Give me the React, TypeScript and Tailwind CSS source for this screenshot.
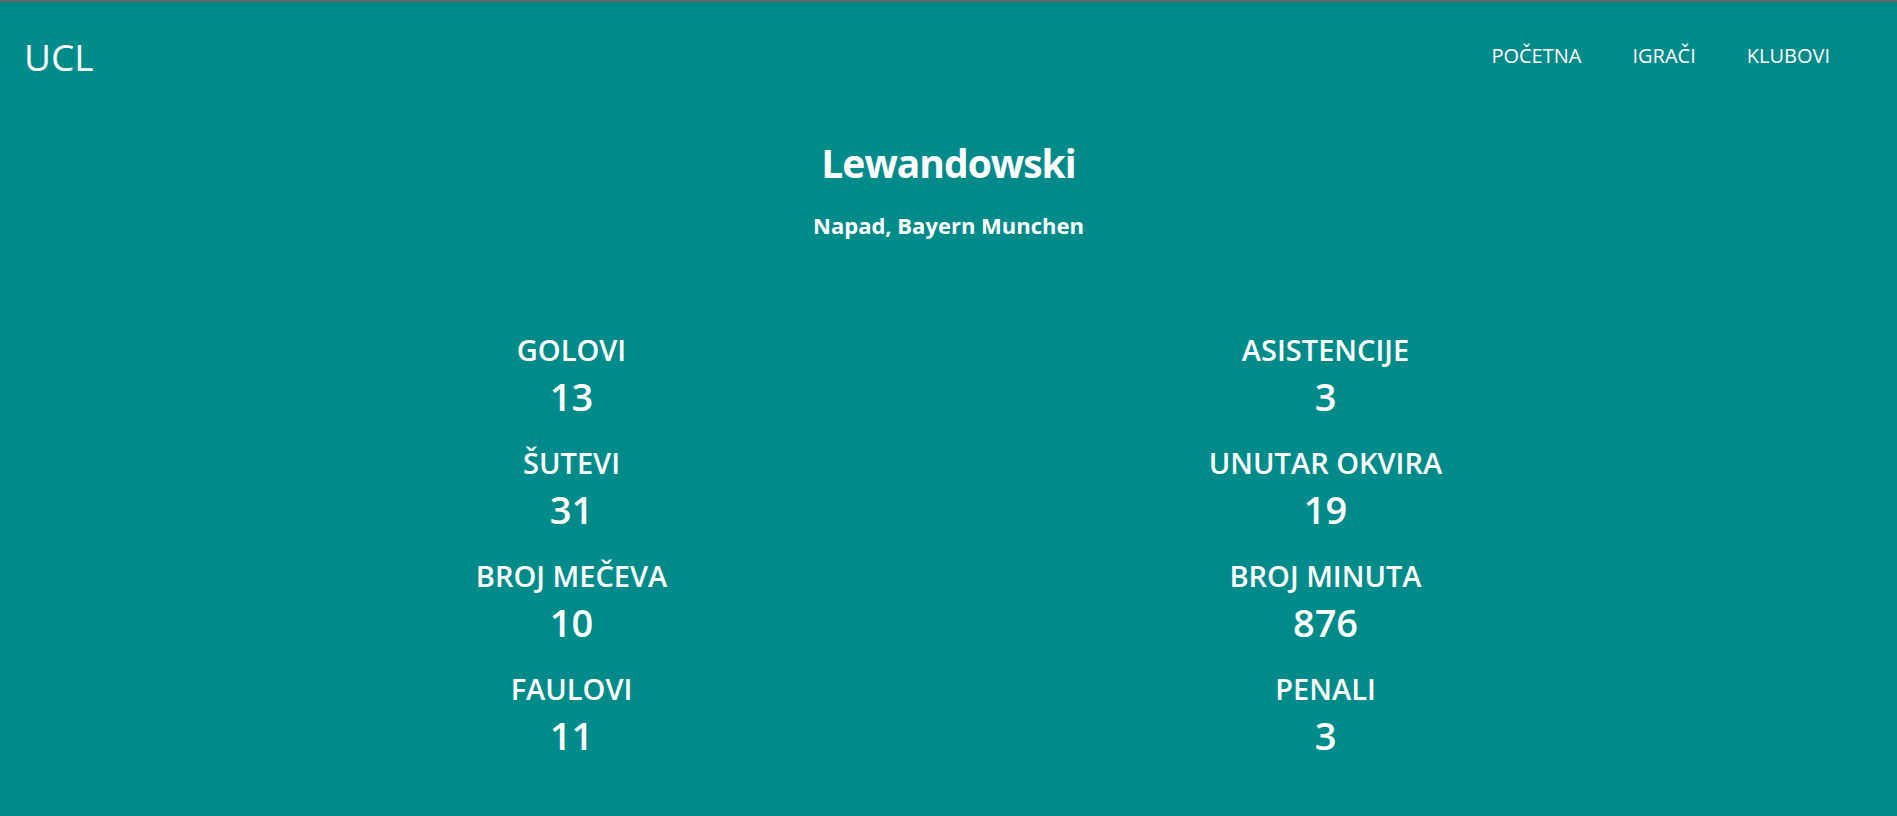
const stats: [string, string][][] = [
    [['GOLOVI', '13'], ['ASISTENCIJE', '3']],
    [['ŠUTEVI', '31'], ['UNUTAR OKVIRA', '19']],
    [['BROJ MEČEVA', '10'], ['BROJ MINUTA', '876']],
    [['FAULOVI', '11'], ['PENALI', '3']],
]

const Stat = ({ label, value }: { label: string; value: string }) => (
    <div className="flex flex-col items-center">
        <h3 className="text-[29px] font-semibold leading-[34px]">{label}</h3>
        <p className="mt-[6px] text-[38px] font-semibold leading-[46px]">{value}</p>
    </div>
)

export default function App() {
    return (
        <div
            className="min-h-[816px] bg-[#008b8b] text-white border-t-2 border-[#666666]"
            style={{ fontFamily: '"Open Sans", "Noto Sans", sans-serif' }}
        >
            <header className="flex items-center justify-between pl-[24px] pr-[67px] h-[108px]">
                <a href="#" className="text-[37px] leading-none">UCL</a>
                <nav>
                    <ul className="flex gap-[51px] text-[20px]">
                        <li><a href="#">POČETNA</a></li>
                        <li><a href="#">IGRAČI</a></li>
                        <li><a href="#">KLUBOVI</a></li>
                    </ul>
                </nav>
            </header>

            <section className="mt-[28px] flex flex-col items-center">
                <h1 className="text-[39px] font-bold leading-[50px] tracking-[-1px]">Lewandowski</h1>
                <h2 className="mt-[23px] text-[22px] font-bold leading-[28px]">Napad, Bayern Munchen</h2>
            </section>

            <div className="mx-auto mt-[94px] grid w-[1508px] grid-cols-2 gap-y-[27px]">
                {stats.map((row) =>
                    row.map(([label, value]) => <Stat key={label} label={label} value={value} />)
                )}
            </div>
        </div>
    )
}
